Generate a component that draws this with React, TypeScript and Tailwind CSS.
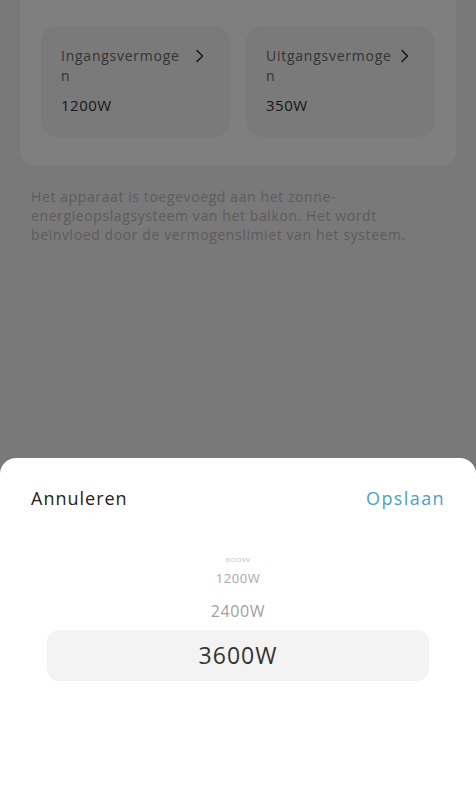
import React from "react";

function Chevron() {
  return (
    <svg width="12" height="14" viewBox="0 0 12 14" fill="none" className="shrink-0 mt-[3px]">
      <path d="M3 1.5 L8.5 7 L3 12.5" stroke="#333" strokeWidth="1.6" strokeLinecap="round" strokeLinejoin="round" />
    </svg>
  );
}

function PowerCard({ l1, l2, value }: { l1: string; l2: string; value: string }) {
  return (
    <div className="flex-1 h-[111px] rounded-[16px] bg-[#f4f4f4] pl-[20px] pr-[24px] pt-[20px]">
      <div className="flex items-start justify-between">
        <div className="text-[14px] leading-[20px] text-[#6a6a6a] tracking-[0.75px]">
          {l1}
          <br />
          {l2}
        </div>
        <Chevron />
      </div>
      <div className="mt-[9px] text-[15px] leading-[20px] text-[#333] tracking-[0.5px]">{value}</div>
    </div>
  );
}

export default function App() {
  return (
    <div className="relative w-[476px] h-[800px] overflow-hidden bg-[#f3f3f3]" style={{ fontFamily: '"Open Sans", "Noto Sans", sans-serif' }}>
      <div className="px-[20px]">
        <div className="-mt-[20px] pt-[46px] pb-[29px] px-[21px] bg-white rounded-b-[16px] flex gap-[16px]">
          <PowerCard l1="Ingangsvermoge" l2="n" value="1200W" />
          <PowerCard l1="Uitgangsvermoge" l2="n" value="350W" />
        </div>
        <p className="mt-[21px] px-[11px] text-[14px] leading-[19px] text-[#b9b9b9] tracking-[0.6px]">
          Het apparaat is toegevoegd aan het zonne-
          <br />
          energieopslagsysteem van het balkon. Het wordt
          <br />
          beïnvloed door de vermogenslimiet van het systeem.
        </p>
      </div>

      <div className="absolute inset-0 bg-black/50" />

      <div className="absolute left-0 right-0 bottom-0 h-[342px] bg-white rounded-t-[16px]">
        <div className="flex items-center justify-between px-[31px] pt-[27px]">
          <span className="text-[18px] leading-[26px] text-[#222] tracking-[1px]">Annuleren</span>
          <span className="text-[18px] leading-[26px] text-[#4a9fcc] font-medium tracking-[1.4px]">Opslaan</span>
        </div>
        <div className="mt-[44px] flex flex-col items-center">
          <div className="h-[10px] text-[9px] leading-[10px] text-[#c4c4c4] tracking-[0.5px] scale-y-50">800W</div>
          <div className="mt-[4px] h-[18px] text-[13px] leading-[18px] text-[#a8a8a8] tracking-[0.6px]">1200W</div>
          <div className="mt-[13px] h-[22px] text-[16px] leading-[22px] text-[#a0a0a0] tracking-[0.6px]">2400W</div>
          <div className="mt-[8px] w-[382px] h-[51px] rounded-[12px] bg-[#f3f3f3] flex items-center justify-center text-[23px] font-medium text-[#333] tracking-[1px]">
            3600W
          </div>
        </div>
      </div>
    </div>
  );
}
